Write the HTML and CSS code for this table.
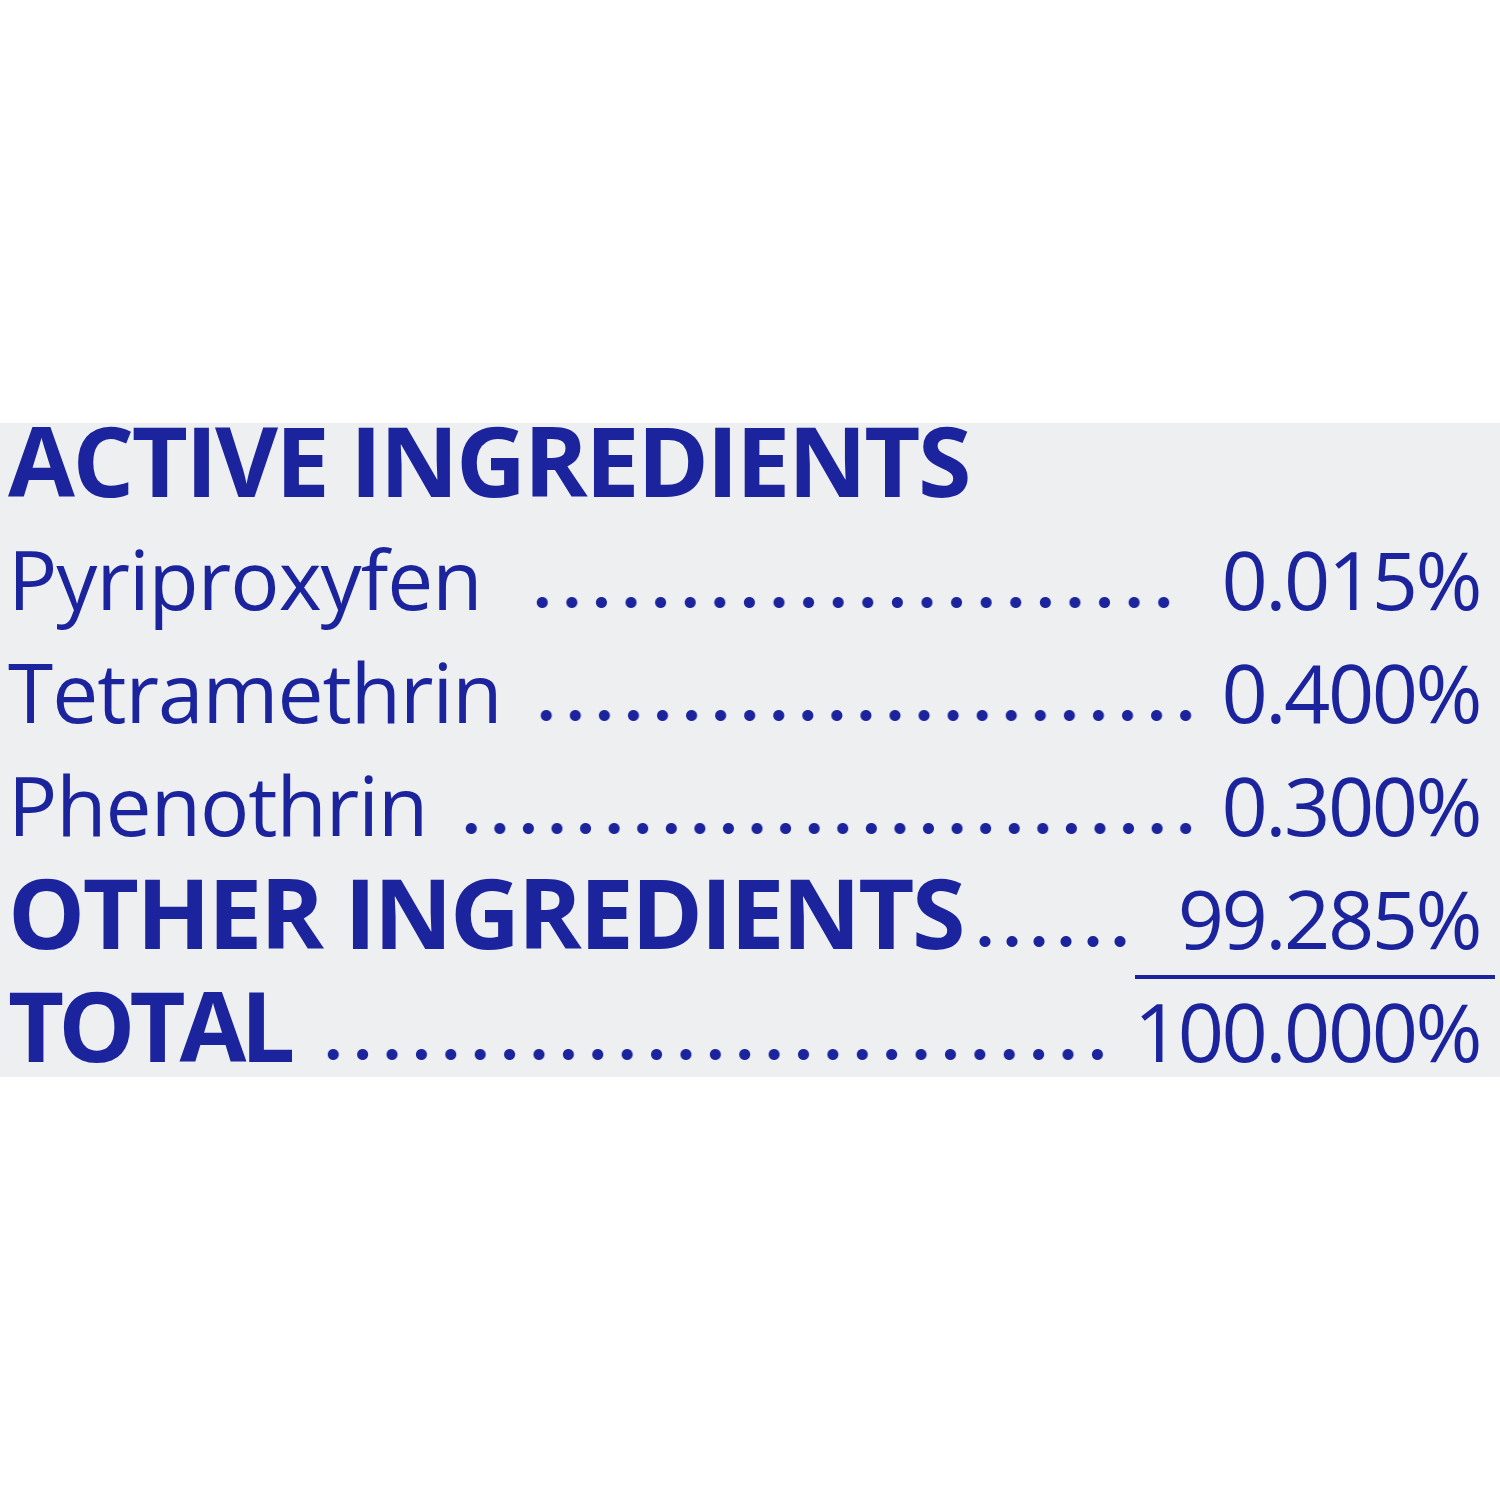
FILE: index.html
```html
<!DOCTYPE html>
<html lang="en">
<head>
    <meta charset="UTF-8">
    <meta name="viewport" content="width=device-width, initial-scale=1.0">
    <title>Ingredients</title>
    <link rel="stylesheet" href="styles.css">
</head>
<body>
    <div class="label">
        <div class="rows">
            <div class="row">
                <span class="heading">ACTIVE INGREDIENTS</span>
            </div>
            <div class="row">
                <span class="name">Pyriproxyfen</span>
                <span class="leader wide"></span>
                <span class="value">0.015%</span>
            </div>
            <div class="row">
                <span class="name">Tetramethrin</span>
                <span class="leader"></span>
                <span class="value">0.400%</span>
            </div>
            <div class="row">
                <span class="name">Phenothrin</span>
                <span class="leader"></span>
                <span class="value">0.300%</span>
            </div>
            <div class="row other">
                <span class="heading">OTHER INGREDIENTS</span>
                <span class="leader short"></span>
                <span class="value">99.285%</span>
            </div>
            <div class="row">
                <span class="heading total">TOTAL</span>
                <span class="leader"></span>
                <span class="value">100.000%</span>
            </div>
        </div>
    </div>
</body>
</html>
```

FILE: styles.css
```css
body {
    margin: 0;
    padding: 0;
    background-color: #fff;
    font-family: "Open Sans", "Noto Sans", sans-serif;
    color: #1b249c;
}

.label {
    margin-top: 423px;
    height: 654px;
    background-color: #eeeff1;
    overflow: hidden;
}

.rows {
    padding: 1px 20px 0 8px;
}

.row {
    position: relative;
    display: flex;
    align-items: baseline;
    height: 113px;
}

.heading {
    font-size: 97px;
    font-weight: 700;
    line-height: 70px;
    letter-spacing: -2.5px;
}

.heading.total {
    letter-spacing: -6px;
}

.name,
.value {
    font-size: 82px;
    font-weight: 400;
    line-height: 82px;
    letter-spacing: -1px;
}

.value {
    font-size: 81px;
    letter-spacing: -2.5px;
}

.leader {
    flex: 1;
    height: 15px;
    margin: 0 22px 0 30px;
    background-image: radial-gradient(circle, #1b249c 5px, transparent 6px);
    background-size: 28.5px 15px;
    background-repeat: space no-repeat;
}

.leader.wide {
    margin: 0 44px 0 46px;
}

.leader.short {
    margin: 0 46px 0 10px;
    background-size: 24px 15px;
}

.other::after {
    content: "";
    position: absolute;
    right: -15px;
    top: 99px;
    width: 360px;
    height: 4px;
    background-color: #1b249c;
}
```
